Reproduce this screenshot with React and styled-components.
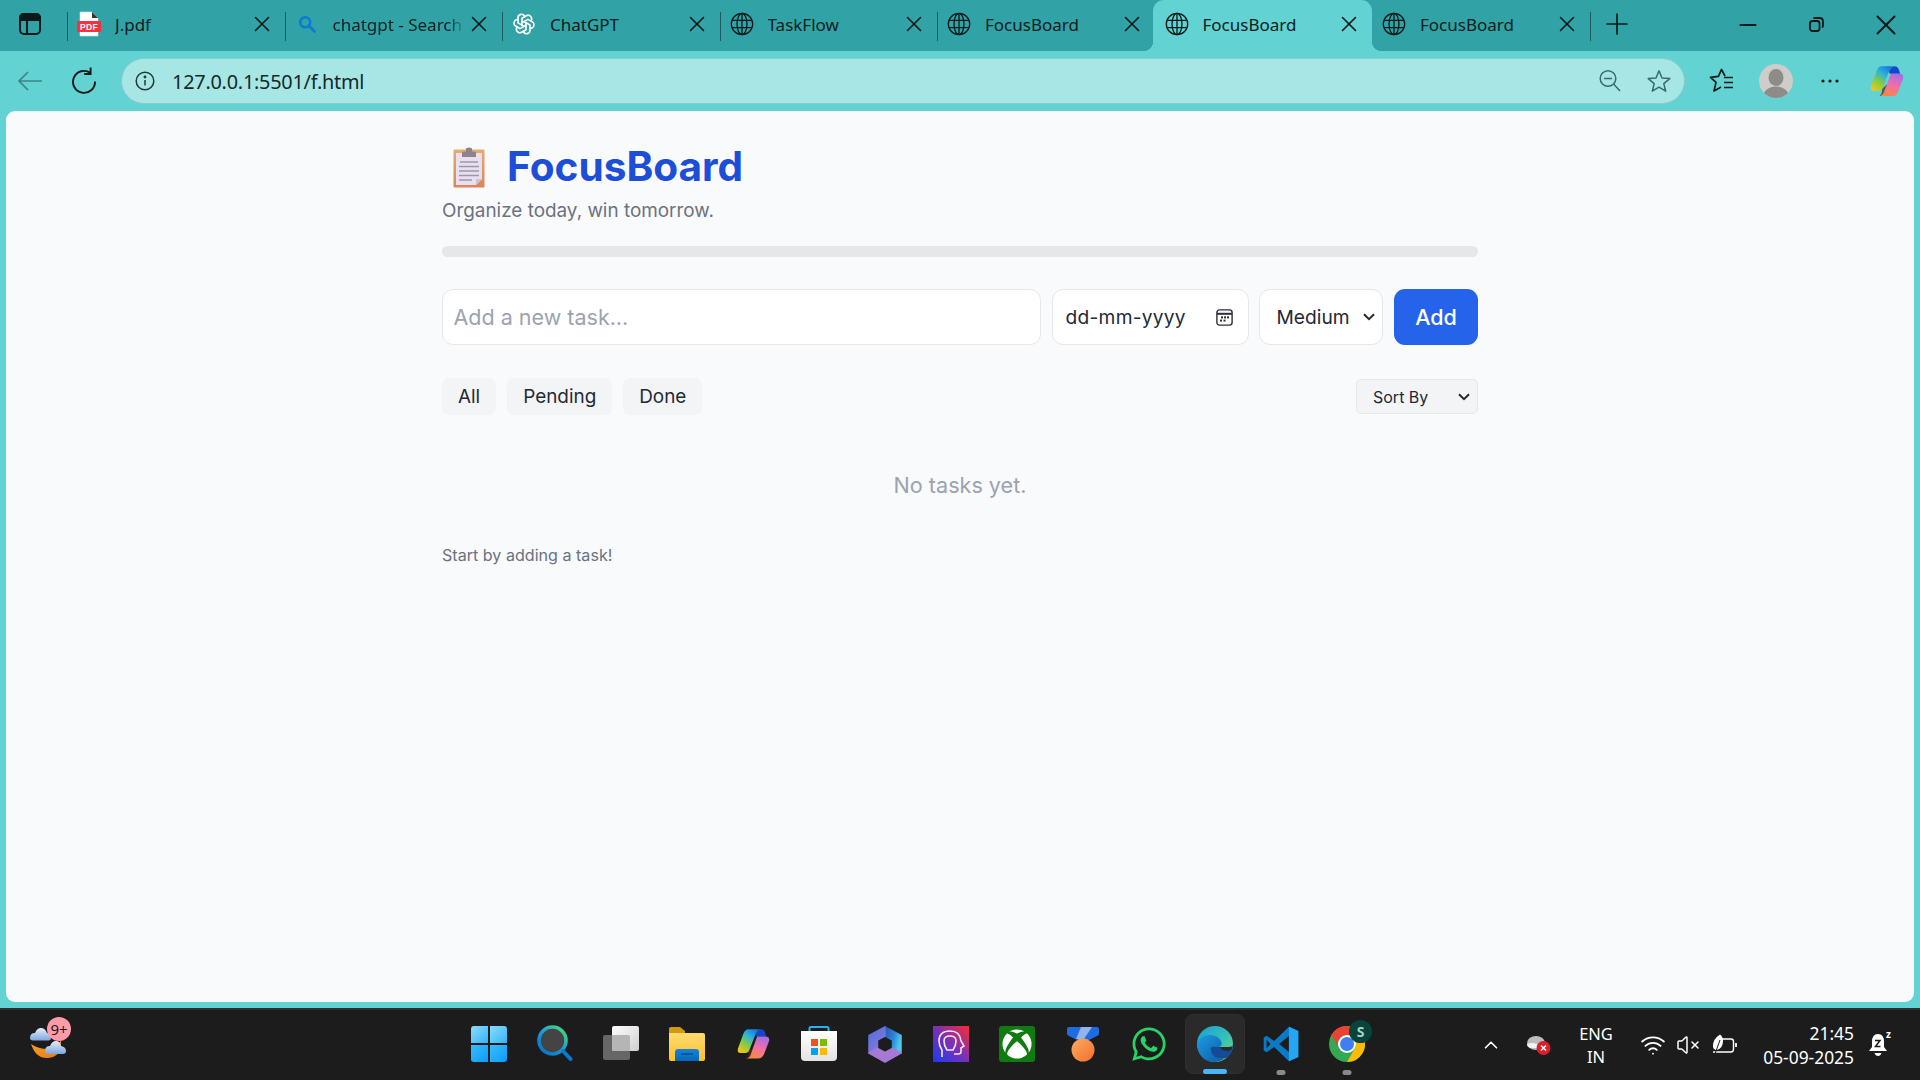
import React from "react";
import styled, { createGlobalStyle } from "styled-components";
import { X, Plus, Minus, ChevronUp, Wifi, VolumeX } from "lucide-react";
import { TbBrandOpenai } from "react-icons/tb";
import { FaXbox, FaWhatsapp } from "react-icons/fa";

const chevron = encodeURIComponent(
  '<svg xmlns="http://www.w3.org/2000/svg" width="12" height="8" viewBox="0 0 12 8"><path d="M1 1.2 L6 6.2 L11 1.2" fill="none" stroke="#252b36" stroke-width="2"/></svg>'
);

const Global = createGlobalStyle`
  * { box-sizing: border-box; }
  html, body { margin: 0; padding: 0; width: 1920px; height: 1080px; overflow: hidden; }
  body { font-family: "Inter", "Liberation Sans", sans-serif; }
`;

const Frame = styled.div`
  width: 1920px; height: 1080px; display: flex; flex-direction: column; background: #62d2d2;
`;
const TabStrip = styled.div`
  height: 51px; background: #31a3a7; display: flex; align-items: stretch; flex: none;
`;
const SideSlot = styled.div`
  width: 67px; display: flex; align-items: center; justify-content: center; padding: 0 7px 3px 0; flex: none;
`;
const Tab = styled.div`
  position: relative; flex: none; height: 51px; display: flex; align-items: center;
  width: ${p => (p.$active ? "219.5px" : "217.5px")};
  margin-left: ${p => (p.$active ? "-2px" : "0")};
  padding: 0 15px 3px ${p => (p.$active ? "12px" : "10px")};
  font: 400 17px "Noto Sans", sans-serif;
  color: #0c2020;
  background: ${p => (p.$active ? "#62d2d2" : "transparent")};
  border-radius: ${p => (p.$active ? "11px 11px 0 0" : "0")};
  ${p => p.$active && `
    &::before, &::after { content: ""; position: absolute; bottom: 0; width: 10px; height: 10px; }
    &::before { left: -10px; background: radial-gradient(circle at 0 0, transparent 10px, #62d2d2 10.5px); }
    &::after { right: -10px; background: radial-gradient(circle at 100% 0, transparent 10px, #62d2d2 10.5px); }
  `}
`;
const Sep = styled.span`
  position: absolute; left: 0; top: 12px; width: 1px; height: 29px;
  background: ${p => (p.$hidden ? "transparent" : "#1c5a5e")};
`;
const TabIcon = styled.span`
  width: 24px; height: 26px; flex: none; display: flex; align-items: center; justify-content: center;
`;
const TabTitle = styled.span`
  flex: 1; min-width: 0; margin-left: 14px; white-space: nowrap; overflow: hidden;
  ${p => p.$fade && "mask-image: linear-gradient(to right, #000 86%, transparent 100%);"}
`;
const TabClose = styled.span`
  width: 16px; height: 16px; flex: none; display: flex; align-items: center; justify-content: center; margin-left: 5px; color: #0a1a1a;
  & > svg { flex: none; }
`;
const EndSep = styled.span`
  width: 1px; height: 29px; margin-top: 12px; background: #1c5a5e; flex: none;
`;
const NewTab = styled.span`
  width: 52px; flex: none; display: flex; align-items: center; justify-content: center; color: #0a1a1a; padding-bottom: 3px;
`;
const WinControls = styled.div`
  margin-left: auto; display: flex; align-items: center; color: #0a1a1a; padding-bottom: 2px;
`;
const WinButton = styled.span`
  width: 69px; display: flex; align-items: center; justify-content: center;
`;

const Toolbar = styled.div`
  height: 60px; flex: none; display: flex; align-items: center; padding: 0 6px 0 3px; color: #101f1f;
`;
const ToolSlot = styled.span`
  width: 54px; height: 46px; flex: none; display: flex; align-items: center; justify-content: center;
  margin-left: ${p => p.$ml || 0}px;
`;
const Address = styled.div`
  width: 1564px; height: 46px; flex: none; margin: 0 10px; border-radius: 23px; background: #a6e7e5;
  border: 1.5px solid #8fcaca; display: flex; align-items: center; padding: 0 13.5px 0 13px;
`;
const UrlText = styled.span`
  font: 400 19.9px "Noto Sans", sans-serif; color: #18282a; margin-left: 17px; letter-spacing: -0.25px;
`;
const AddressActions = styled.div`
  margin-left: auto; display: flex; gap: 25.5px; align-items: center;
`;

const Viewport = styled.div`
  height: 891px; flex: none; margin: 0 6px; background: #f9fafc; border-radius: 9px;
`;
const Column = styled.main`
  width: 1036px; margin: 0 auto; padding-top: 32px;
`;
const TitleRow = styled.h1`
  margin: 0; display: flex; align-items: center; height: 48px; padding-left: 11px; gap: 22px;
  font: 700 40.6px/48px "Inter", sans-serif; color: #1d4ed8;
`;
const Subtitle = styled.p`
  margin: 7px 0 0; font: 400 18.9px/26px "Inter", sans-serif; color: #6b7280;
`;
const Progress = styled.div`
  margin-top: 22px; height: 11px; border-radius: 6px; background: #e5e7eb;
`;
const Form = styled.div`
  margin-top: 32px; height: 56px; display: flex; gap: 11px;
`;
const TaskInput = styled.input`
  flex: 1; min-width: 0; height: 56px; border: 1.5px solid #e5e7eb; border-radius: 11px; background: #fff;
  padding: 0 10.5px; font: 400 21.5px "Inter", sans-serif; color: #1f2937; outline: none;
  &::placeholder { color: #9ca3af; opacity: 1; }
`;
const DateField = styled.div`
  width: 197px; height: 56px; flex: none; margin-right: -1px; border: 1.5px solid #e5e7eb; border-radius: 11px; background: #fff;
  display: flex; align-items: center; justify-content: space-between; padding: 0 15px 0 12.5px;
  font: 400 19.2px "Inter", sans-serif; letter-spacing: 0.25px; color: #1f2937;
`;
const PrioritySelect = styled.select`
  width: 124px; height: 56px; flex: none; border: 1.5px solid #e5e7eb; border-radius: 11px;
  appearance: none; background: #fff url("data:image/svg+xml,${chevron}") no-repeat right 7px center;
  padding: 0 0 0 16.5px; font: 400 19.2px "Inter", sans-serif; color: #1f2937; outline: none;
`;
const AddButton = styled.button`
  width: 84px; height: 56px; flex: none; border: 0; border-radius: 11px; background: #2563eb; color: #fff;
  font: 500 21.5px "Inter", sans-serif;
`;
const FilterRow = styled.div`
  margin-top: 33px; height: 37px; display: flex; align-items: center; gap: 11px;
`;
const FilterButton = styled.button`
  height: 37px; padding: 0 16px; border: 0; border-radius: 7px; background: #f3f4f6; color: #1f2937;
  font: 400 18.9px "Inter", sans-serif;
`;
const SortSelect = styled.select`
  margin-left: auto; width: 122px; height: 35px; border: 1px solid #e5e7eb; border-radius: 5px;
  appearance: none; background: #f3f4f6 url("data:image/svg+xml,${chevron}") no-repeat right 7px center;
  padding: 0 0 0 16px; font: 400 16px "Inter", sans-serif; color: #1f2937; outline: none;
`;
const EmptyText = styled.p`
  margin: 55px 0 0; text-align: center; font: 400 21.6px/30px "Inter", sans-serif; color: #9ca3af;
`;
const HintText = styled.p`
  margin: 45px 0 0; font: 400 16.1px/20px "Inter", sans-serif; color: #6b7280;
`;

const Taskbar = styled.footer`
  margin-top: 6px; height: 72px; flex: none; background: #1c1c1c; border-top: 2px solid #2e2e2e;
  display: flex; align-items: center; color: #fff; font: 400 16px "Noto Sans", sans-serif;
`;
const Widget = styled.div`
  width: 456px; flex: none; height: 100%; padding-left: 28px; display: flex; align-items: center;
`;
const WeatherBox = styled.div`
  position: relative; width: 44px; height: 44px; margin-top: -4px;
`;
const WeatherBadge = styled.span`
  position: absolute; left: 19px; top: -4px; width: 24px; height: 24px; border-radius: 50%; background: #ff9aa8;
  color: #1a1a1a; display: flex; align-items: center; justify-content: center; font: 400 15px "Noto Sans", sans-serif;
`;
const Apps = styled.div`
  display: flex; flex: none; height: 100%; align-items: center;
`;
const AppSlot = styled.div`
  position: relative; width: 66px; height: 60px; flex: none; display: flex; align-items: center; justify-content: center;
  margin-top: -2px;
  ${p => p.$active && "background: #2a2a2a; border-radius: 8px; border: 1px solid #303030; margin: -2px 3px 0; width: 60px;"}
`;
const RunDot = styled.span`
  position: absolute; bottom: -1px; left: 50%; transform: translateX(-50%); height: 5px; border-radius: 3px;
  width: ${p => (p.$active ? "24px" : "9px")};
  background: ${p => (p.$active ? "#46b8f5" : "#8a8a8a")};
`;
const ProfileBadge = styled.span`
  position: absolute; right: 8px; top: 6px; width: 23px; height: 23px; border-radius: 50%; background: #07443a;
  color: #a6d4c8; display: flex; align-items: center; justify-content: center; font: 700 14px "Noto Sans", sans-serif;
`;
const Tray = styled.div`
  flex: 1; height: 100%; display: flex; align-items: center; justify-content: flex-end; padding-right: 30px;
`;
const TrayItem = styled.span`
  flex: none; width: ${p => p.$w}px; margin-right: ${p => p.$mr || 0}px; display: flex; align-items: center; justify-content: center;
  position: relative;
`;
const LangBlock = styled.span`
  display: flex; flex-direction: column; align-items: center; line-height: 23px; font-size: 16.5px;
`;
const ClockBlock = styled.span`
  display: flex; flex-direction: column; align-items: flex-end; line-height: 24px; font-size: 17.4px; white-space: nowrap; width: 100%;
`;
const BellZ = styled.span`
  position: absolute; right: -1px; top: -4px; font: 700 10px/10px "Noto Sans", sans-serif; color: #fff;
`;

const SidebarIcon = () => (
  <svg width="22" height="22" viewBox="0 0 22 22" fill="none" stroke="#0a1a1a" strokeWidth="2">
    <rect x="1" y="1" width="20" height="20" rx="4" />
    <path d="M1 5.5 Q1 1 5 1 H17 Q21 1 21 5.5 V7 H1Z" fill="#0a1a1a" />
    <path d="M8 7 V21" />
  </svg>
);
const PdfIcon = () => (
  <svg width="24" height="26" viewBox="0 0 24 26">
    <path d="M3 1 H15 L21 7 V25 H3Z" fill="#fff" stroke="#ddd" strokeWidth=".6" />
    <path d="M15 1 V7 H21Z" fill="#333" />
    <rect x="0" y="10" width="24" height="11" rx="1" fill="#f5333f" />
    <text x="12" y="18.6" textAnchor="middle" fontSize="8.5" fontWeight="700" fontFamily="Liberation Sans" fill="#fff" letterSpacing=".4">PDF</text>
  </svg>
);
const SearchTabIcon = () => (
  <svg width="18" height="18" viewBox="0 0 18 18" fill="none" stroke="#0f7ad0" strokeWidth="2.6">
    <circle cx="7.2" cy="7.2" r="5" />
    <path d="M11 11 L16.5 16.5" strokeLinecap="round" />
  </svg>
);
const GlobeIcon = () => (
  <svg width="26" height="26" viewBox="0 0 26 26" fill="none" stroke="#0a1a1a" strokeWidth="1.4">
    <circle cx="13" cy="13" r="11.6" />
    <ellipse cx="13" cy="13" rx="5.4" ry="11.6" />
    <path d="M13 1.4 V24.6 M2.4 9 H23.6 M2.4 17 H23.6" />
  </svg>
);
const BackIcon = () => (
  <svg width="26" height="22" viewBox="0 0 26 22" fill="none" stroke="#3c8487" strokeWidth="1.7">
    <path d="M25 11 H2 M11 2 L2 11 L11 20" />
  </svg>
);
const RefreshIcon = () => (
  <svg width="26" height="28" viewBox="0 0 26 28" fill="none" stroke="#0c1a1a" strokeWidth="1.9">
    <path d="M19.5 6 A11 11 0 1 0 24 14.5" />
    <path d="M19.6 0.5 V7 H13.2" />
  </svg>
);
const InfoIcon = () => (
  <svg width="20" height="20" viewBox="0 0 20 20" fill="none" stroke="#24383a" strokeWidth="1.5">
    <circle cx="10" cy="10" r="8.8" />
    <path d="M10 9 V14.5" />
    <circle cx="10" cy="6" r=".7" fill="#24383a" />
  </svg>
);
const ZoomOutIcon = () => (
  <svg width="22" height="24" viewBox="0 0 22 24" fill="none" stroke="#3a6a6c" strokeWidth="1.5">
    <circle cx="9" cy="9.5" r="7.8" />
    <path d="M5 9.5 H13 M14.6 15 L21 22" />
  </svg>
);
const StarIcon = () => (
  <svg width="24" height="24" viewBox="0 0 24 24" fill="none" stroke="#3a6a6c" strokeWidth="1.5" strokeLinejoin="round">
    <path d="M12 1.8 L15 9 L22.8 9.6 L16.8 14.6 L18.7 22.2 L12 18.1 L5.3 22.2 L7.2 14.6 L1.2 9.6 L9 9Z" />
  </svg>
);
const FavIcon = () => (
  <svg width="26" height="26" viewBox="0 0 26 26" fill="none" stroke="#0a1a1a" strokeWidth="1.7" strokeLinejoin="round">
    <path d="M16 8 L12.5 1.5 L9.4 8.4 L1.5 9.4 L7 14.4 L5 23 L12 19" />
    <path d="M15 9.5 H24 M15 14.5 H24 M15 19.5 H24" />
  </svg>
);
const ProfileIcon = () => (
  <svg width="34" height="34" viewBox="0 0 34 34">
    <defs><clipPath id="pc"><circle cx="17" cy="17" r="17" /></clipPath></defs>
    <circle cx="17" cy="17" r="17" fill="#cfcdc9" />
    <g clipPath="url(#pc)" fill="#8e8c89">
      <ellipse cx="17" cy="13.5" rx="7.5" ry="8.5" />
      <ellipse cx="17" cy="33" rx="13" ry="10.5" />
    </g>
  </svg>
);
const DotsIcon = () => (
  <svg width="20" height="4" viewBox="0 0 20 4" fill="#0a1a1a">
    <circle cx="3" cy="2" r="1.6" /><circle cx="10" cy="2" r="1.6" /><circle cx="17" cy="2" r="1.6" />
  </svg>
);
const RestoreIcon = () => (
  <svg width="15" height="15" viewBox="0 0 15 15" fill="none" stroke="#0a1a1a" strokeWidth="1.8">
    <rect x="1" y="4" width="9.5" height="10" rx="2.5" />
    <path d="M4.5 1.5 Q5 1 6 1 H10.5 Q14 1 14 4.5 V8.5 Q14 10 13 10.5" />
  </svg>
);
const CopilotIcon = ({ id, size = 33 }) => (
  <svg width={size} height={size * 0.9} viewBox="0 0 36 32">
    <defs>
      <linearGradient id={`${id}a`} x1="0.8" y1="0" x2="0.1" y2="1">
        <stop offset="0" stopColor="#1b6fe6" /><stop offset=".35" stopColor="#2bb4d8" />
        <stop offset=".65" stopColor="#8ccb3e" /><stop offset="1" stopColor="#f7c51c" />
      </linearGradient>
      <linearGradient id={`${id}b`} x1="0.7" y1="0" x2="0.3" y2="1">
        <stop offset="0" stopColor="#a86be8" /><stop offset=".5" stopColor="#f26fa5" /><stop offset="1" stopColor="#f78a3c" />
      </linearGradient>
    </defs>
    <path d="M12 0 H26 Q22 1 20 6 L13 24 Q12 26 9 26 H4 Q0 26 1 21 L7 5 Q9 0 12 0Z" fill={`url(#${id}a)`} />
    <path d="M26 0 Q30 0 31 5 L32 8 H21 L20 6 Q22 1 26 0Z" fill="#1546c8" />
    <path d="M22 8 H31 Q36 8 35 13 L30 26 Q28 32 23 32 H10 Q14 31 15 27Z" fill={`url(#${id}b)`} />
    <path d="M13 24 L18 19 L15 27 Q14 31 10 32 Q13 29 13 24Z" fill="#5a2420" opacity=".7" />
  </svg>
);
const CalendarIcon = () => (
  <svg width="17" height="17" viewBox="0 0 17 17" fill="none" stroke="#2a2f37" strokeWidth="1.4">
    <rect x=".9" y=".9" width="15.2" height="15.2" rx="2.6" />
    <path d="M1 4.8 H16" strokeWidth="2" />
    <g fill="#2a2f37" stroke="none">
      <rect x="5" y="7.4" width="2" height="2" /><rect x="8" y="7.4" width="2" height="2" /><rect x="11" y="7.4" width="2" height="2" />
      <rect x="4" y="10.6" width="2" height="2" /><rect x="7.5" y="10.6" width="2" height="2" />
    </g>
  </svg>
);
const ClipboardIcon = () => (
  <svg width="32" height="41" viewBox="0 0 32 41">
    <defs>
      <linearGradient id="clipb" x1="0" y1="0" x2="0" y2="1">
        <stop offset="0" stopColor="#e7ab70" /><stop offset="1" stopColor="#dd8456" />
      </linearGradient>
    </defs>
    <rect x="0.5" y="2.5" width="31" height="38" rx="1" fill="url(#clipb)" />
    <path d="M3 6 H29 V32 L23 38 H3Z" fill="#e8e0f0" />
    <path d="M23 38 V32 H29Z" fill="#cdc3d8" />
    <path d="M7 15 H25 M6 19.5 H26 M6 24 H26 M6 28.5 H26 M6 33 H19" stroke="#9d97a6" strokeWidth="1.3" />
    <path d="M9 10 V6 Q9 4.5 11 4.5 H13 V2 Q13 .5 16 .5 Q19 .5 19 2 V4.5 H21 Q23 4.5 23 6 V10Z" fill="#8d8489" />
  </svg>
);
const WeatherIcon = () => (
  <svg width="44" height="44" viewBox="0 0 44 44">
    <defs>
      <linearGradient id="cl" x1="0" y1="0" x2="0" y2="1"><stop offset="0" stopColor="#e5eefc" /><stop offset="1" stopColor="#7da6dc" /></linearGradient>
      <linearGradient id="mo" x1="0" y1="0" x2="1" y2="1"><stop offset="0" stopColor="#f4a21c" /><stop offset="1" stopColor="#ea7a14" /></linearGradient>
    </defs>
    <path d="M3 23 Q8 38 20 37 Q34 36 33 19 Q28 28 20 28 Q10 28 3 23Z" fill="url(#mo)" />
    <path d="M2 17 Q2 12 7 12 Q9 7 13 7 Q17 7 19 12 Q23 13 23 17 Q23 19 21 19.5 H5 Q2 19 2 17Z" fill="url(#cl)" />
    <path d="M17 30 Q17 25 22 25 Q24 20 28 20 Q32 20 33 25 Q38 26 38 30 Q38 33 35 33 H20 Q17 33 17 30Z" fill="url(#cl)" />
  </svg>
);
const StartIcon = () => (
  <svg width="36" height="36" viewBox="0 0 36 36">
    <defs>
      <linearGradient id="st1" x1="0" y1="0" x2="1" y2="1"><stop offset="0" stopColor="#8bdcff" /><stop offset="1" stopColor="#32b4f8" /></linearGradient>
      <linearGradient id="st2" x1="0" y1="0" x2="1" y2="1"><stop offset="0" stopColor="#38bdfb" /><stop offset="1" stopColor="#0c9bf7" /></linearGradient>
    </defs>
    <path d="M3 0 H17 V17 H0 V3 Q0 0 3 0Z" fill="url(#st1)" />
    <path d="M19 0 H33 Q36 0 36 3 V17 H19Z" fill="url(#st1)" />
    <path d="M0 19 H17 V36 H3 Q0 36 0 33Z" fill="url(#st2)" />
    <path d="M19 19 H36 V33 Q36 36 33 36 H19Z" fill="url(#st2)" />
  </svg>
);
const SearchAppIcon = () => (
  <svg width="36" height="38" viewBox="0 0 36 38" fill="none">
    <defs>
      <linearGradient id="sa" x1="0.9" y1="0" x2="0.1" y2="1"><stop offset="0" stopColor="#47d97a" /><stop offset=".5" stopColor="#1a9bd8" /><stop offset="1" stopColor="#0a6fc6" /></linearGradient>
    </defs>
    <circle cx="15.5" cy="15.5" r="13.5" fill="#444" stroke="url(#sa)" strokeWidth="3.6" />
    <path d="M26 26 L33.5 34" stroke="#0a78cf" strokeWidth="4" strokeLinecap="round" />
  </svg>
);
const TaskViewIcon = () => (
  <svg width="36" height="36" viewBox="0 0 36 36">
    <defs>
      <linearGradient id="tv" x1="0" y1="0" x2="1" y2="1"><stop offset="0" stopColor="#fff" /><stop offset="1" stopColor="#cfcfcf" /></linearGradient>
    </defs>
    <rect x="0" y="9" width="27" height="25" rx="2" fill="#666" />
    <rect x="9" y="0" width="27" height="25" rx="2" fill="url(#tv)" />
    <path d="M9 9 H25 Q27 9 27 11 V25 H11 Q9 25 9 23Z" fill="#b5b5b5" />
  </svg>
);
const FolderIcon = () => (
  <svg width="36" height="34" viewBox="0 0 36 34">
    <defs>
      <linearGradient id="fo" x1="0" y1="0" x2="0" y2="1"><stop offset="0" stopColor="#ffdc70" /><stop offset="1" stopColor="#fbc02d" /></linearGradient>
      <linearGradient id="fb" x1="0" y1="0" x2="0" y2="1"><stop offset="0" stopColor="#1484dc" /><stop offset="1" stopColor="#0568b4" /></linearGradient>
    </defs>
    <path d="M0 2 Q0 0 2 0 H11 L16 4 V9 H0Z" fill="#d39a10" />
    <path d="M0 6 H34 Q36 6 36 8 V32 Q36 34 34 34 H2 Q0 34 0 32Z" fill="url(#fo)" />
    <path d="M6 34 V25 Q6 22 9 22 H27 Q30 22 30 25 V34Z" fill="url(#fb)" />
    <path d="M12 27 H24" stroke="#064f8a" strokeWidth="1.6" />
  </svg>
);
const StoreIcon = () => (
  <svg width="36" height="36" viewBox="0 0 36 36">
    <defs>
      <linearGradient id="sto" x1="0" y1="0" x2="0" y2="1"><stop offset="0" stopColor="#fff" /><stop offset="1" stopColor="#e3e3e3" /></linearGradient>
    </defs>
    <path d="M8.5 8 V2 Q8.5 1 10 1 H26 Q27.5 1 27.5 2 V8" fill="none" stroke="#22b6ee" strokeWidth="2" />
    <path d="M0 5 H36 V31 Q36 35 32 35 H4 Q0 35 0 31Z" fill="url(#sto)" />
    <rect x="10" y="13" width="7" height="7" fill="#f25022" />
    <rect x="19" y="13" width="7" height="7" fill="#7fba00" />
    <rect x="10" y="22" width="7" height="7" fill="#00a4ef" />
    <rect x="19" y="22" width="7" height="7" fill="#ffb900" />
  </svg>
);
const M365Icon = () => (
  <svg width="34" height="37" viewBox="0 0 34 37">
    <defs>
      <linearGradient id="m1" x1="0" y1="0" x2="1" y2="0.4"><stop offset="0" stopColor="#2a55b8" /><stop offset=".6" stopColor="#2f85d4" /><stop offset="1" stopColor="#4cc8ea" /></linearGradient>
      <linearGradient id="m2" x1="0" y1="0" x2="0.6" y2="1"><stop offset="0" stopColor="#4a6fd8" /><stop offset="1" stopColor="#8a78dc" /></linearGradient>
    </defs>
    <g strokeLinejoin="round" strokeWidth="1.5">
      <path d="M17 1 L33 9.5 V27 L24.5 22.5 V14 L17 10Z" fill="url(#m1)" stroke="url(#m1)" />
      <path d="M17 1 L1 9.5 V27 L9.5 22.5 V14 L17 10Z" fill="url(#m2)" stroke="url(#m2)" />
      <path d="M1 27 L17 36 L33 27 L24.5 22.5 L17 26.5 L9.5 22.5Z" fill="#a57ad6" stroke="#a57ad6" />
    </g>
  </svg>
);
const ClipIcon = () => (
  <svg width="36" height="36" viewBox="0 0 36 36">
    <defs>
      <linearGradient id="cc" x1="0" y1="1" x2="1" y2="0"><stop offset="0" stopColor="#1a3bf0" /><stop offset=".5" stopColor="#7a30b8" /><stop offset="1" stopColor="#ff2a30" /></linearGradient>
    </defs>
    <rect width="36" height="36" fill="url(#cc)" />
    <path d="M9 31 V24 Q6 20 6 15 Q6 5 17 5 Q27 5 28 15 L31 20 L28 22 V26 Q28 28 25 28 H21" fill="none" stroke="#f2e8f4" strokeWidth="1.6" />
    <path d="M14 24 Q11 20 11 15 Q11 10 17 10 Q23 10 23 15 Q23 20 20 24Z" fill="none" stroke="#f2e8f4" strokeWidth="1.6" />
  </svg>
);
const XboxTile = styled.span`
  width: 36px; height: 36px; border-radius: 3px; background: #107c10; display: flex; align-items: center; justify-content: center; color: #fff;
`;
const MedalIcon = () => (
  <svg width="32" height="36" viewBox="0 0 32 36">
    <defs>
      <linearGradient id="md" x1="0" y1="0" x2="1" y2="1"><stop offset="0" stopColor="#ffab5e" /><stop offset="1" stopColor="#f0702e" /></linearGradient>
    </defs>
    <path d="M0 3 Q0 1 2 1 H30 Q32 1 32 3 V8 Q32 9 30 10 L22 14 H10 L2 10 Q0 9 0 8Z" fill="#1e6ce0" />
    <path d="M14 1 H25 L17 13 H9Z" fill="#8fb4ef" />
    <circle cx="16" cy="24" r="11.5" fill="url(#md)" />
  </svg>
);
const EdgeIcon = () => (
  <svg width="36" height="36" viewBox="0 0 36 36">
    <defs>
      <linearGradient id="e1" x1="0" y1="0" x2="1" y2="1"><stop offset="0" stopColor="#1a9ed8" /><stop offset=".55" stopColor="#35c1b8" /><stop offset="1" stopColor="#7fd858" /></linearGradient>
      <linearGradient id="e2" x1="0" y1="0" x2="1" y2="1"><stop offset="0" stopColor="#1b9de2" /><stop offset="1" stopColor="#0f5aa8" /></linearGradient>
    </defs>
    <circle cx="18" cy="18" r="18" fill="url(#e1)" />
    <path d="M0 18 Q3 9 13 9 Q21 9 24 15 Q26 20 22 21 H17 Q12 22 14 26 Q17 32 27 33 Q22 36 18 36 Q2 36 0 18Z" fill="url(#e2)" />
    <path d="M14 26 Q12 20 18 21 H28 Q36 21 36 19 Q36 26 31 31 Q26 34 21 32 Q16 31 14 26Z" fill="#134a9a" />
    <path d="M23 21 H35 Q35 25 30 25 Q24 25 23 21Z" fill="#2a2a2a" />
  </svg>
);
const VscodeIcon = () => (
  <svg width="36" height="36" viewBox="0 0 100 100">
    <path fillRule="evenodd" d="M72 2 L31 42 L10 27 L2 32 V68 L10 73 L31 58 L72 98 L98 86 V14Z M72 28 L45 50 L72 72Z M10 38 L21 50 L10 62Z" fill="#0b7ac6" />
    <path fillRule="evenodd" d="M72 2 L98 14 V86 L72 98Z" fill="#24a6f2" />
  </svg>
);
const ChromeIcon = () => (
  <svg width="36" height="36" viewBox="0 0 36 36">
    <circle cx="18" cy="18" r="18" fill="#34a853" />
    <path d="M18 0 A18 18 0 0 1 33.6 9 H18 A9 9 0 0 0 10.2 22.5 L2.4 9 A18 18 0 0 1 18 0Z" fill="#ea4335" />
    <path d="M33.6 9 A18 18 0 0 1 18 36 L25.8 22.5 A9 9 0 0 0 18 9Z" fill="#fbbc05" />
    <circle cx="18" cy="18" r="9" fill="#fff" />
    <circle cx="18" cy="18" r="7" fill="#3f7ff0" />
  </svg>
);
const TrayCloudIcon = () => (
  <svg width="26" height="24" viewBox="0 0 26 24">
    <ellipse cx="10" cy="10" rx="9" ry="7" fill="#bdbdbd" />
    <path d="M1 11 Q10 8 15 15 H6 Q1 15 1 11Z" fill="#f2f2f2" />
    <circle cx="17.5" cy="15" r="7" fill="#d9202c" />
    <path d="M15 12.5 L20 17.5 M20 12.5 L15 17.5" stroke="#fff" strokeWidth="1.5" />
  </svg>
);
const BatteryIcon = () => (
  <svg width="26" height="22" viewBox="0 0 26 22" fill="none" stroke="#fff" strokeWidth="1.4">
    <path d="M10 5 H19 Q21.5 5 21.5 7.5 V15 Q21.5 18 19 18 H1" />
    <path d="M24 9 V13" strokeWidth="1.8" />
    <path d="M8 .6 Q1 5 1 12 Q1 16 5 16 Q11 14 11 7 Q11 3 8 .6Z" fill="#fff" stroke="none" />
    <path d="M3 20 L8 6" stroke="#1c1c1c" strokeWidth="1" />
  </svg>
);
const BellIcon = () => (
  <svg width="22" height="24" viewBox="0 0 22 24" fill="#fff">
    <path d="M11 1 Q17 1 17 9 V14 L20 18 H2 L5 14 V9 Q5 1 11 1Z" />
    <path d="M7.5 20 H14.5 Q13.5 23 11 23 Q8.5 23 7.5 20Z" />
    <path d="M8 7.5 H13 L8.5 13.5 H13.5" fill="none" stroke="#1c1c1c" strokeWidth="1.5" />
  </svg>
);

const tabs = [
  { icon: <PdfIcon />, title: "J.pdf" },
  { icon: <SearchTabIcon />, title: "chatgpt - Search", fade: true },
  { icon: <TbBrandOpenai size={26} color="#fff" strokeWidth={1.6} />, title: "ChatGPT" },
  { icon: <GlobeIcon />, title: "TaskFlow" },
  { icon: <GlobeIcon />, title: "FocusBoard" },
  { icon: <GlobeIcon />, title: "FocusBoard", active: true },
  { icon: <GlobeIcon />, title: "FocusBoard", noSep: true },
];

const apps = [
  { key: "start", icon: <StartIcon /> },
  { key: "search", icon: <SearchAppIcon /> },
  { key: "view", icon: <TaskViewIcon /> },
  { key: "files", icon: <FolderIcon /> },
  { key: "copilot", icon: <CopilotIcon id="cpt" /> },
  { key: "store", icon: <StoreIcon /> },
  { key: "m365", icon: <M365Icon /> },
  { key: "clip", icon: <ClipIcon /> },
  { key: "xbox", icon: <XboxTile><FaXbox size={30} /></XboxTile> },
  { key: "medal", icon: <MedalIcon /> },
  { key: "wa", icon: <FaWhatsapp size={38} color="#25d366" /> },
  { key: "edge", icon: <EdgeIcon />, active: true, dot: true },
  { key: "code", icon: <VscodeIcon />, dot: true },
  { key: "chrome", icon: <ChromeIcon />, dot: true, badge: "S" },
];

export default function App() {
  return (
    <Frame>
      <Global />
      <TabStrip>
        <SideSlot><SidebarIcon /></SideSlot>
        {tabs.map((t, i) => (
          <Tab key={i} $active={t.active}>
            <Sep $hidden={t.active || t.noSep} />
            <TabIcon>{t.icon}</TabIcon>
            <TabTitle $fade={t.fade}>{t.title}</TabTitle>
            <TabClose><X size={26} strokeWidth={1.5} /></TabClose>
          </Tab>
        ))}
        <EndSep />
        <NewTab><Plus size={34} strokeWidth={1.2} /></NewTab>
        <WinControls>
          <WinButton><Minus size={26} strokeWidth={1.8} /></WinButton>
          <WinButton><RestoreIcon /></WinButton>
          <WinButton><X size={34} strokeWidth={1.4} /></WinButton>
        </WinControls>
      </TabStrip>
      <Toolbar>
        <ToolSlot><BackIcon /></ToolSlot>
        <ToolSlot><RefreshIcon /></ToolSlot>
        <Address>
          <InfoIcon />
          <UrlText>127.0.0.1:5501/f.html</UrlText>
          <AddressActions>
            <ZoomOutIcon />
            <StarIcon />
          </AddressActions>
        </Address>
        <ToolSlot><FavIcon /></ToolSlot>
        <ToolSlot><ProfileIcon /></ToolSlot>
        <ToolSlot><DotsIcon /></ToolSlot>
        <ToolSlot $ml={3}><CopilotIcon id="cpb" size={34} /></ToolSlot>
      </Toolbar>
      <Viewport>
        <Column>
          <TitleRow><ClipboardIcon />FocusBoard</TitleRow>
          <Subtitle>Organize today, win tomorrow.</Subtitle>
          <Progress />
          <Form>
            <TaskInput placeholder="Add a new task..." />
            <DateField>dd-mm-yyyy<CalendarIcon /></DateField>
            <PrioritySelect defaultValue="Medium">
              <option>Low</option><option>Medium</option><option>High</option>
            </PrioritySelect>
            <AddButton>Add</AddButton>
          </Form>
          <FilterRow>
            <FilterButton>All</FilterButton>
            <FilterButton>Pending</FilterButton>
            <FilterButton>Done</FilterButton>
            <SortSelect defaultValue="Sort By">
              <option>Sort By</option><option>Priority</option><option>Date</option>
            </SortSelect>
          </FilterRow>
          <EmptyText>No tasks yet.</EmptyText>
          <HintText>Start by adding a task!</HintText>
        </Column>
      </Viewport>
      <Taskbar>
        <Widget>
          <WeatherBox>
            <WeatherIcon />
            <WeatherBadge>9+</WeatherBadge>
          </WeatherBox>
        </Widget>
        <Apps>
          {apps.map(a => (
            <AppSlot key={a.key} $active={a.active}>
              {a.icon}
              {a.badge && <ProfileBadge>{a.badge}</ProfileBadge>}
              {a.dot && <RunDot $active={a.active} />}
            </AppSlot>
          ))}
        </Apps>
        <Tray>
          <TrayItem $w={22} $mr={23}><ChevronUp size={24} strokeWidth={1.8} /></TrayItem>
          <TrayItem $w={28} $mr={23}><TrayCloudIcon /></TrayItem>
          <TrayItem $w={40} $mr={24}><LangBlock><span>ENG</span><span>IN</span></LangBlock></TrayItem>
          <TrayItem $w={26} $mr={9}><Wifi size={26} strokeWidth={1.7} /></TrayItem>
          <TrayItem $w={26} $mr={11}><VolumeX size={24} strokeWidth={1.5} /></TrayItem>
          <TrayItem $w={26} $mr={16}><BatteryIcon /></TrayItem>
          <TrayItem $w={100} $mr={12}><ClockBlock><span>21:45</span><span>05-09-2025</span></ClockBlock></TrayItem>
          <TrayItem $w={24}><BellIcon /><BellZ>z</BellZ></TrayItem>
        </Tray>
      </Taskbar>
    </Frame>
  );
}
